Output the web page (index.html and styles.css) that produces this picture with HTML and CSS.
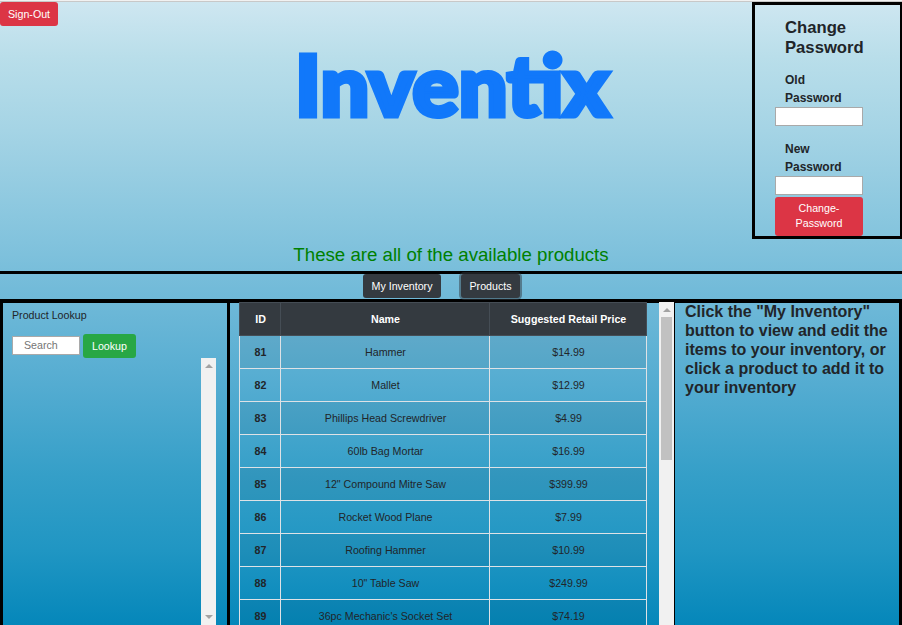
FILE: index.html
```html
<!DOCTYPE html>
<html lang="en">
<head>
<meta charset="utf-8">
<title>Inventix</title>
<link rel="stylesheet" href="styles.css">
</head>
<body>
<header class="top">
  <div class="top-left"><button class="btn danger">Sign-Out</button></div>
  <div class="brand">
    <svg class="logo" width="350" height="140" viewBox="0 0 350 140"><text x="14" y="103.5" textLength="314" lengthAdjust="spacingAndGlyphs">Inventix</text></svg>
    <p class="message">These are all of the available products</p>
  </div>
  <form class="password">
    <h2>Change Password</h2>
    <label for="old">Old Password</label>
    <input id="old" type="password">
    <label for="new" class="second">New Password</label>
    <input id="new" type="password">
    <button type="button" class="btn danger wide">Change-Password</button>
  </form>
</header>
<nav class="tabs">
  <button class="btn dark">My Inventory</button>
  <button class="btn dark active">Products</button>
</nav>
<main class="panels">
  <section class="lookup">
    <p>Product Lookup</p>
    <div class="search"><input type="text" placeholder="Search"><button class="btn success">Lookup</button></div>
    <div class="scrollbar results"><i class="up"></i><i class="down"></i></div>
  </section>
  <section class="products">
    <table>
      <thead><tr><th class="id">ID</th><th class="name">Name</th><th class="price">Suggested Retail Price</th></tr></thead>
      <tbody>
        <tr><th>81</th><td>Hammer</td><td>$14.99</td></tr>
        <tr><th>82</th><td>Mallet</td><td>$12.99</td></tr>
        <tr><th>83</th><td>Phillips Head Screwdriver</td><td>$4.99</td></tr>
        <tr><th>84</th><td>60lb Bag Mortar</td><td>$16.99</td></tr>
        <tr><th>85</th><td>12" Compound Mitre Saw</td><td>$399.99</td></tr>
        <tr><th>86</th><td>Rocket Wood Plane</td><td>$7.99</td></tr>
        <tr><th>87</th><td>Roofing Hammer</td><td>$10.99</td></tr>
        <tr><th>88</th><td>10" Table Saw</td><td>$249.99</td></tr>
        <tr><th>89</th><td>36pc Mechanic's Socket Set</td><td>$74.19</td></tr>
      </tbody>
    </table>
    <div class="scrollbar"><i class="up"></i><b class="thumb"></b></div>
  </section>
  <aside class="info"><h3>Click the "My Inventory" button to view and edit the items to your inventory, or click a product to add it to your inventory</h3></aside>
</main>
</body>
</html>
```
FILE: styles.css
```css
* { box-sizing: border-box; }
body {
  margin: 0;
  height: 625px;
  overflow: hidden;
  border-top: 1px solid #f1f1f1;
  font: 12px/1.5 "Liberation Sans", Arial, sans-serif;
  color: #212529;
  background: linear-gradient(#cfe7f1 0, #b9deea 57px, #a5d4e5 130px, #7ec1dc 255px, #6fb9d8 300px, #54acd1 385px, #359fc8 475px, #2096c3 550px, #0587ba 625px);
}
p, h2, h3 { margin: 0; }
.btn {
  height: 24px;
  padding: 0 8px;
  border: 0;
  border-radius: 3px;
  font: 10.67px/15px "Liberation Sans", Arial, sans-serif;
  color: #fff;
  white-space: nowrap;
}
.danger { background: #dc3545; }
.dark { background: #343a40; }
.success { background: #28a745; }
.top {
  display: grid;
  grid-template-columns: 150px 602px 150px;
  height: 273px;
  border-top: 1px solid #c8c8c8;
  border-bottom: 3px solid #000;
}
.top-left .btn { display: block; width: 58px; }
.brand {
  display: flex;
  flex-direction: column;
  align-items: center;
  justify-content: space-between;
  padding: 10px 0 1px;
}
.logo { display: block; margin-left: 9px; }
.logo text {
  font: 900 84px Lato, sans-serif;
  fill: #1178fa;
  stroke: #1178fa;
  stroke-width: 5px;
}
.message { font-size: 18.67px; line-height: 30px; color: green; }
.password {
  height: 237px;
  border: 3px solid #000;
  border-right-width: 2px;
  padding: 13px 37px 0 20px;
}
.password h2 { margin-left: 10px; font-size: 16.67px; line-height: 20px; }
.password label { display: block; width: 70px; margin: 13px 0 0 10px; font-weight: bold; line-height: 18px; }
.password .second { margin-top: 14px; }
input {
  display: block;
  border: 1px solid #a9a9a9;
  background: #fff;
  padding: 0;
  font: 10.67px "Liberation Sans", Arial, sans-serif;
}
.password input { width: 88px; height: 19px; }
.password .wide { display: block; width: 88px; height: 39px; margin-top: 2px; padding: 0 16px 2px; white-space: normal; }
.tabs {
  display: flex;
  gap: 20px;
  height: 28px;
  padding-left: 363px;
  border-bottom: 3px solid #000;
}
.active { box-shadow: 0 0 0 2px rgba(52, 58, 64, .5); }
.tabs .btn:first-child { width: 78px; }
.tabs .btn:last-child { width: 59px; }
.panels { display: grid; grid-template-columns: 230px 444px 228px; height: 323px; }
.lookup { display: flex; flex-direction: column; border: 3px solid #000; border-width: 1px 3px 0; padding: 3px 11px 0 9px; }
.lookup p { font-size: 10.67px; line-height: 18px; }
.search { display: flex; align-items: center; gap: 3px; margin-top: 10px; }
.search input { width: 68px; height: 19px; padding: 0 0 1px 11px; margin-top: -1px; }
.search input::placeholder { color: #757575; opacity: 1; }
.search .btn { width: 53px; }
.scrollbar { display: flex; flex-direction: column; align-items: center; width: 15px; background: #f1f1f1; }
.results { height: 267px; align-self: flex-end; justify-content: space-between; }
.up, .down { width: 0; border: 4px solid transparent; }
.up { border-top: 0; border-bottom-color: #a3a3a3; margin-top: 6px; }
.down { border-bottom: 0; border-top-color: #a3a3a3; margin-bottom: 6px; }
.thumb { width: 11px; height: 143px; margin-top: 5px; background: #c1c1c1; }
.products {
  display: flex;
  justify-content: space-between;
  align-items: flex-start;
  padding-left: 9px;
  background: linear-gradient(#000, #000) top / 100% 1px no-repeat;
}
.products .scrollbar { height: 323px; }
table { width: 408px; table-layout: fixed; border-collapse: collapse; font-size: 10.67px; line-height: 16px; text-align: center; }
th, td { height: 33px; padding: 0 0 0 1px; border: 1px solid #dee2e6; }
thead th { background: #343a40; border-color: #454d55; color: #fff; }
.id { width: 41px; }
.name { width: 209px; }
tbody tr:nth-child(odd) { background: rgba(0, 0, 0, .05); }
.info { border: 1px solid #000; border-width: 1px 3px 0 1px; padding: 0 4px 0 10px; }
.info h3 { font-size: 16px; line-height: 19px; margin-top: -1px; }
```
